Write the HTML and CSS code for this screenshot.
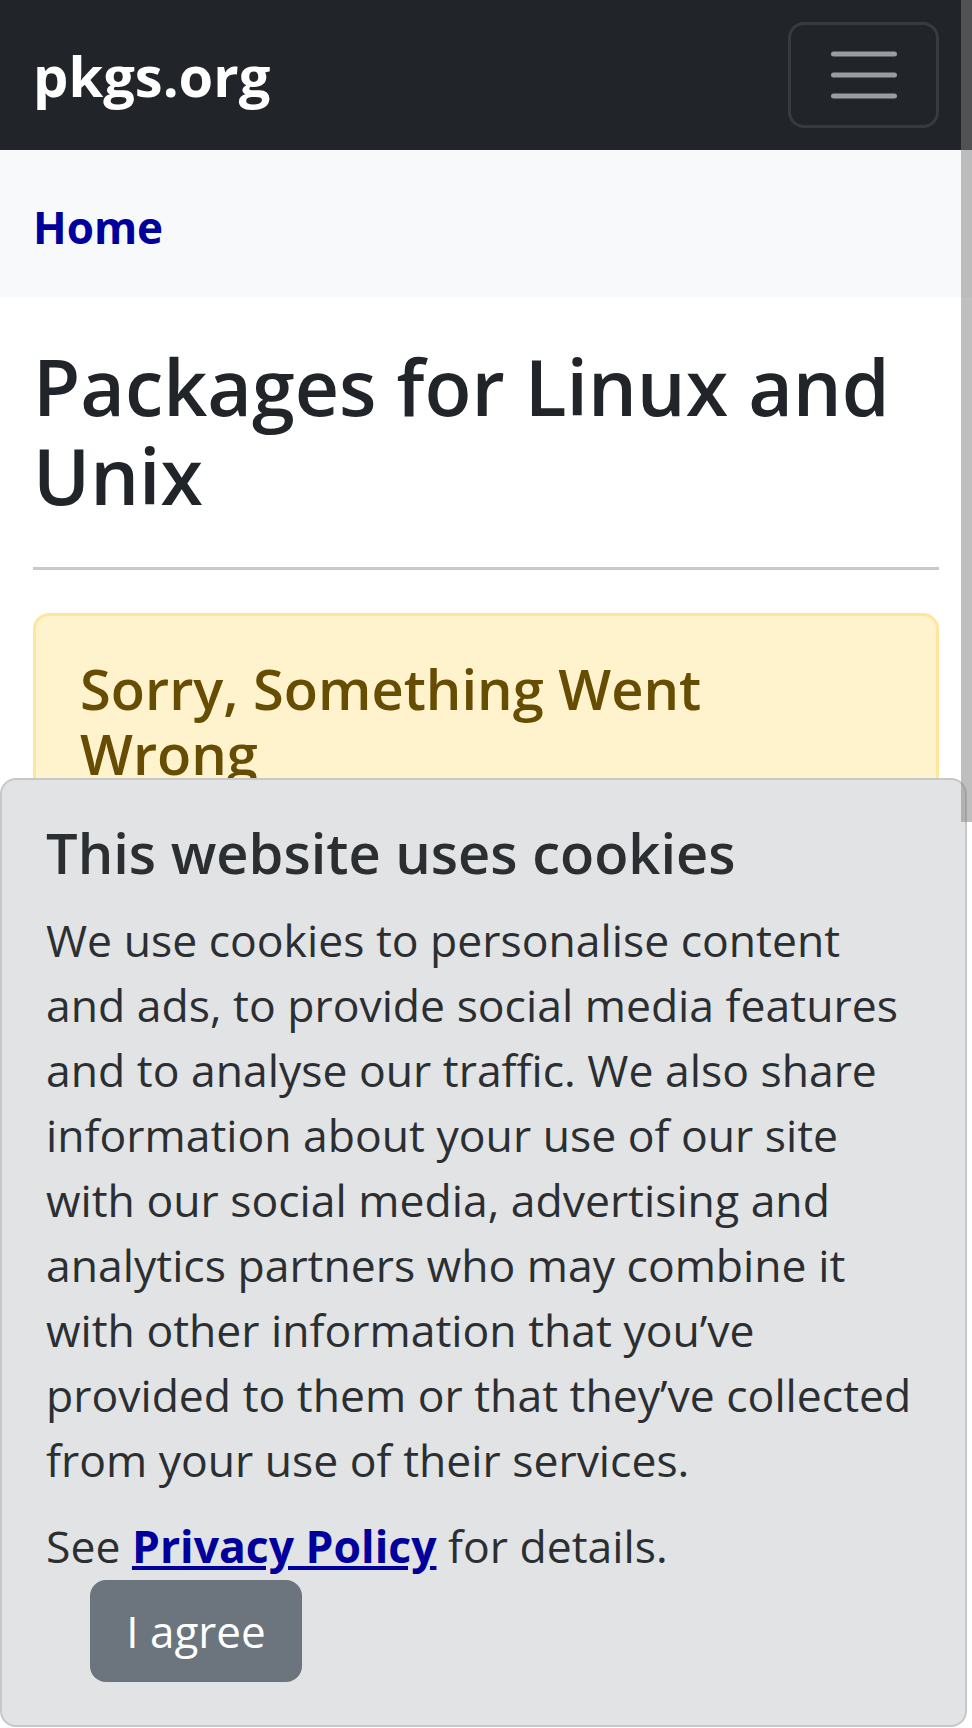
FILE: index.html
```html
<!DOCTYPE html>
<html lang="en">
<head>
<meta charset="utf-8">
<title>pkgs.org</title>
<link rel="stylesheet" href="styles.css">
</head>
<body>
<nav class="navbar">
  <a class="brand" href="#">pkgs.org</a>
  <button class="toggler" type="button" aria-label="Toggle navigation">
    <svg class="toggler-icon" width="66" height="48" viewBox="0 0 66 48">
      <path d="M2.5 3h61M2.5 24h61M2.5 45h61" stroke="#9a9c9f" stroke-width="5" stroke-linecap="round" fill="none"/>
    </svg>
  </button>
</nav>
<div class="crumbs">
  <a class="crumb-link" href="#">Home</a>
</div>
<main class="container">
  <h1 class="title">Packages for Linux and Unix</h1>
  <hr class="rule">
  <div class="alert">
    <h2 class="alert-heading">Sorry, Something Went Wrong</h2>
  </div>
</main>
<div class="cookie">
  <h3 class="cookie-title">This website uses cookies</h3>
  <p class="cookie-text">We use cookies to personalise content and ads, to provide social media features and to analyse our traffic. We also share information about your use of our site with our social media, advertising and analytics partners who may combine it with other information that you’ve provided to them or that they’ve collected from your use of their services.</p>
  <p class="cookie-text cookie-last">See <a class="policy" href="#">Privacy Policy</a> for details.</p>
  <button class="agree" type="button">I agree</button>
</div>
<div class="scroll-thumb"></div>
</body>
</html>
```
FILE: styles.css
```css
html {
  overflow: hidden;
}
body {
  margin: 0;
  font-family: "Open Sans", "Noto Sans", sans-serif;
  color: #212529;
  background: #fff;
}
.navbar {
  height: 150px;
  background: #212529;
  display: flex;
  align-items: center;
  justify-content: space-between;
  padding: 0 33px;
  box-sizing: border-box;
}
.brand {
  color: #fff;
  text-decoration: none;
  font-size: 56px;
  font-weight: 700;
}
.toggler {
  width: 151px;
  height: 106px;
  box-sizing: border-box;
  border: 3px solid rgba(255, 255, 255, 0.1);
  border-radius: 16px;
  background: transparent;
  display: flex;
  align-items: center;
  justify-content: center;
  padding: 0;
}
.toggler-icon {
  display: block;
}
.crumbs {
  height: 147px;
  box-sizing: border-box;
  background: #f8f9fa;
  display: flex;
  align-items: center;
  padding: 6px 33px 0;
}
.crumb-link {
  color: #00009c;
  text-decoration: none;
  font-weight: 700;
  font-size: 44px;
}
.container {
  padding: 0 33px;
}
.title {
  margin: 0;
  padding-top: 45px;
  font-size: 77px;
  line-height: 89px;
  font-weight: 600;
  color: #212529;
}
.rule {
  margin: 47px 0 43px;
  border: 0;
  border-top: 3px solid #c8c9ca;
}
.alert {
  background: #fff3cd;
  border: 3px solid #ffe69c;
  border-radius: 16px;
  padding: 40px 70px 200px 44px;
}
.alert-heading {
  margin: 0;
  color: #664d03;
  font-size: 56px;
  line-height: 65px;
  font-weight: 600;
}
.cookie {
  position: fixed;
  left: 0;
  right: 5px;
  bottom: 1px;
  z-index: 10;
  background: #e2e3e5;
  border: 2px solid #c6c7c9;
  border-radius: 16px;
  padding: 40px 42px 43px 44px;
  color: #2b2f32;
}
.cookie-title {
  margin: 0 0 22px;
  font-size: 56px;
  line-height: 65px;
  font-weight: 600;
}
.cookie-text {
  margin: 0 0 21px;
  font-size: 44.5px;
  line-height: 65px;
}
.cookie-last {
  margin-bottom: 2px;
}
.policy {
  color: #00009c;
  font-weight: 700;
}
.agree {
  display: block;
  margin-left: 44px;
  width: 212px;
  height: 102px;
  background: #6c757d;
  color: #fff;
  border: 0;
  border-radius: 16px;
  font-family: inherit;
  font-size: 44px;
  padding: 0;
}
.scroll-thumb {
  position: fixed;
  top: 0;
  right: 0;
  width: 11px;
  height: 822px;
  background: rgba(128, 128, 128, 0.5);
  z-index: 20;
}
```
